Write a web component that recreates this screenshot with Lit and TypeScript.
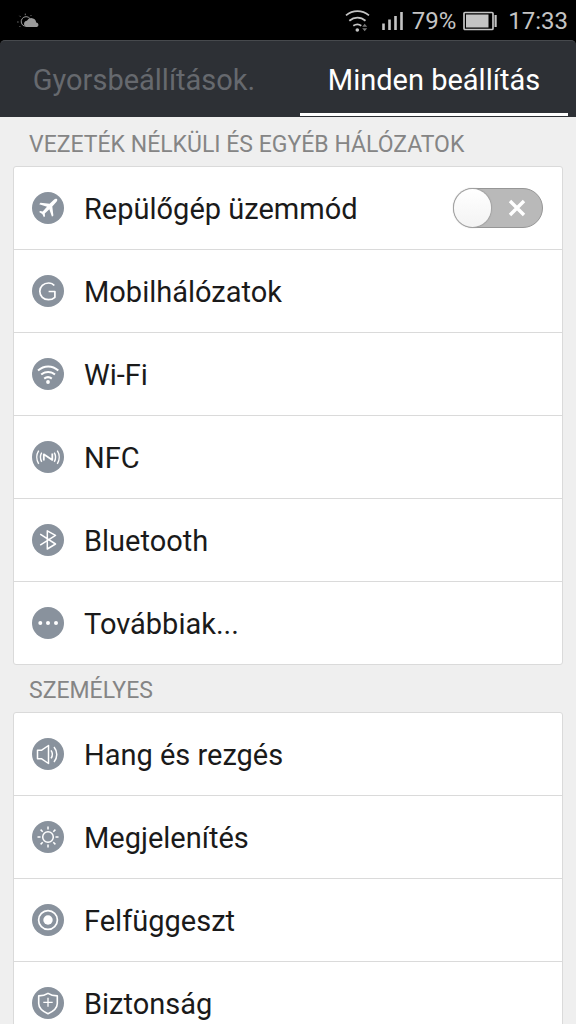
import { LitElement, html, css, svg, TemplateResult } from "lit";
import { customElement, state } from "lit/decorators.js";

interface Item {
  id: string;
  label: string;
  icon: TemplateResult;
  toggle?: boolean;
}

const icons = {
  plane: svg`<path class="fill" d="M24.900 7.100c-.8-.7-2-.3-3 .6l-4.300 4.100-9.100-1-1.300 1.400 7.800 2.600-4.300 4.600-2.600-.4-1 1.100 3.200 1.800 1.600 3.300 1.100-1-.2-2.700 4.500-4.300 2.700 7.500 1.400-1.300-1.100-8.800 4-4.500c.9-1 1.400-2.300.6-3z"/>`,
  mobile: svg`<path class="line" stroke-width="1.700" d="M22.300 10.600c-1.300-1.700-3.300-2.600-5.700-2.600-5 0-8.800 3.500-8.800 8.300s3.700 8.400 8.700 8.400c2.500 0 4.700-.9 6.400-2.400v-5.800h-6.300"/>`,
  wifi: svg`<path class="line" stroke-width="2" d="M6 12.500c6-5.400 14.300-5.400 20.300 0M9.200 16.600c4.200-3.600 9.700-3.600 13.800 0M12.200 20.600c2.400-1.900 5.200-1.900 7.600 0"/><circle class="fill" cx="16" cy="24" r="1.900"/>`,
  nfc: svg`<path class="line" stroke-width="1.800" stroke-linejoin="miter" d="M11.800 19.600v-6.300l8.500 5.600v-6.300"/><path class="line" stroke-width="1.400" d="M9.700 11.600c-1.500 2.700-1.500 6.500 0 9.200M6.700 9.600c-2.500 3.900-2.500 9.300 0 13.200M22.300 11.600c1.500 2.700 1.500 6.500 0 9.200M25.300 9.600c2.500 3.900 2.500 9.300 0 13.200"/>`,
  bluetooth: svg`<path class="line" stroke-width="1.500" d="M8.200 10.200l15.300 9.800-8.200 5V6.800l8.200 4.600-15.300 9.800"/>`,
  more: svg`<circle class="fill" cx="8.300" cy="16" r="2"/><circle class="fill" cx="16" cy="16" r="2"/><circle class="fill" cx="24" cy="16" r="2"/>`,
  sound: svg`<path class="line" stroke-width="1.500" stroke-linejoin="miter" d="M5.500 12.200h4.200l6.800-4.700v18l-6.800-4.700H5.500zM19 12.400c1.700 2.400 1.700 5.600 0 8M22 9c3.700 4.500 3.700 10.500 0 15"/>`,
  display: svg`<circle class="line" stroke-width="1.500" cx="16" cy="16" r="5.300"/><path class="line" stroke-width="1.500" d="M16 5.500v3M16 23.500v3M5.500 16h3M23.500 16h3M8.600 8.600l2.100 2.100M21.300 21.300l2.100 2.100M8.600 23.400l2.100-2.100M21.300 10.700l2.100-2.100"/>`,
  suspend: svg`<circle class="line" stroke-width="1.700" cx="16" cy="16" r="9.400"/><circle class="fill" cx="16" cy="16" r="4.700"/>`,
  security: svg`<path class="line" stroke-width="1.600" stroke-linejoin="miter" d="M16 6.300c2.600 1.700 5.700 2.500 9.300 2.600v7.600c0 4.800-4.300 8-9.300 10.300-5-2.300-9.300-5.500-9.300-10.300V8.900c3.600-.1 6.700-.9 9.300-2.600z"/><path class="line" stroke-width="1.300" d="M16 10.800v9M11.300 15.300h9.400"/>`,
};

const network: Item[] = [
  { id: "airplane", label: "Repülőgép üzemmód", icon: icons.plane, toggle: true },
  { id: "mobile", label: "Mobilhálózatok", icon: icons.mobile },
  { id: "wifi", label: "Wi-Fi", icon: icons.wifi },
  { id: "nfc", label: "NFC", icon: icons.nfc },
  { id: "bluetooth", label: "Bluetooth", icon: icons.bluetooth },
  { id: "more", label: "Továbbiak...", icon: icons.more },
];

const personal: Item[] = [
  { id: "sound", label: "Hang és rezgés", icon: icons.sound },
  { id: "display", label: "Megjelenítés", icon: icons.display },
  { id: "suspend", label: "Felfüggeszt", icon: icons.suspend },
  { id: "security", label: "Biztonság", icon: icons.security },
];

@customElement("status-bar")
export class StatusBar extends LitElement {
  static styles = css`
    :host {
      display: flex;
      align-items: center;
      justify-content: space-between;
      box-sizing: border-box;
      height: 40px;
      padding: 2px 8px 0 16px;
      background: #000;
      color: #c4c4c4;
      font-size: 24px;
      line-height: 38px;
    }
    .group {
      display: flex;
      align-items: center;
    }
    .signal {
      margin: 0 9px 0 11px;
    }
    .battery {
      margin: 0 10px 0 6px;
    }
    svg {
      display: block;
    }
  `;

  render() {
    return html`
      <svg width="24" height="16" viewBox="0 0 24 16" role="img" aria-label="Időjárás">
        <path d="M8.500 13.200a4.900 4.900 0 1 1 5.500-7.600" fill="none" stroke="#9a9a9a" stroke-width="1" />
        <path d="M9.300.6v1.600M3.500 2.800l1 1M14.400 3.100l1-1M1.200 9h1.400M3.500 13.900l.9-.9" stroke="#777" stroke-width="1" />
        <path d="M10.500 14a3.200 3.200 0 0 1 .4-6.300 5 5 0 0 1 9.300 1.700 2.400 2.400 0 0 1 .8 4.600z" fill="#9a9a9a" />
      </svg>
      <div class="group">
        <svg width="25" height="24" viewBox="0 0 25 24" role="img" aria-label="Wi-Fi">
          <path d="M1 6.400c6.800-5.600 16-5.600 23 0M4.300 11.800c5-4.200 11.300-4.200 16.200 0M8.300 16.800c2.700-1.900 5.600-1.900 8 0" fill="none" stroke="#c4c4c4" stroke-width="1.800" />
          <circle cx="12.300" cy="21" r="1.800" fill="#c4c4c4" />
          <path d="M17.200 17.800l2.500-3 2.500 3zM17.200 19.200h5l-2.500 3z" fill="#777" />
        </svg>
        <svg class="signal" width="22" height="20" viewBox="0 0 22 20" role="img" aria-label="Térerő">
          <path d="M2.500 19v-6.500M8.500 19V8.500M14.500 19V5M20.500 19V1" stroke="#c4c4c4" stroke-width="2.600" />
        </svg>
        <span>79%</span>
        <svg class="battery" width="36" height="20" viewBox="0 0 36 20" role="img" aria-label="Akkumulátor">
          <rect x="2" y="1.500" width="29" height="17" rx="1" fill="none" stroke="#c4c4c4" stroke-width="1.700" />
          <rect x="4" y="3.500" width="22.500" height="13" fill="#c4c4c4" />
          <path d="M32.500 4h2.200v12h-2.200" fill="#c4c4c4" />
        </svg>
        <time>17:33</time>
      </div>
    `;
  }
}

@customElement("settings-group")
export class SettingsGroup extends LitElement {
  static properties = {
    heading: { type: String },
    items: { attribute: false },
  };
  declare heading: string;
  declare items: Item[];

  static styles = css`
    :host {
      display: block;
      padding-bottom: 1px;
    }
    h2 {
      margin: 0;
      padding: 3px 16px 0;
      font-size: 23px;
      font-weight: 400;
      line-height: 43px;
      color: #858585;
    }
    ul {
      margin: 0;
      padding: 0;
      list-style: none;
      background: #fff;
      border: 1px solid #dadada;
      border-radius: 3px;
    }
    li + li {
      border-top: 1px solid #dadada;
    }
    .row {
      display: flex;
      align-items: center;
      gap: 20px;
      box-sizing: border-box;
      width: 100%;
      height: 82px;
      margin: 0;
      padding: 0 19px 0 18px;
      border: 0;
      background: none;
      color: #1a1a1a;
      font: inherit;
      font-size: 29px;
      text-align: left;
    }
    .name {
      flex: 1;
      padding-top: 1px;
    }
    .icon {
      flex: none;
      display: block;
      width: 32px;
      height: 32px;
    }
    .disc {
      fill: #89929d;
    }
    .fill {
      fill: #fff;
    }
    .line {
      fill: none;
      stroke: #fff;
      stroke-linejoin: round;
    }
    .switch {
      display: grid;
      align-items: center;
    }
    .switch > * {
      grid-area: 1 / 1;
    }
    .track {
      appearance: none;
      box-sizing: border-box;
      display: flex;
      width: 90px;
      height: 40px;
      margin: 0;
      border: 1px solid #969696;
      border-radius: 20px;
      background: #b9b9b9;
    }
    .track::before {
      content: "";
      width: 37px;
      height: 38px;
      border-radius: 19px;
      background: linear-gradient(#fff, #f3f3f3);
      box-shadow: 0 0 1px 1px #a2a2a2;
    }
    .track:checked {
      justify-content: flex-end;
      background: #3fb0c4;
    }
    .cross {
      justify-self: end;
      margin-right: 17px;
      pointer-events: none;
    }
    .track:checked + .cross {
      visibility: hidden;
    }
  `;

  private content(item: Item) {
    return html`
      <svg class="icon" viewBox="0 0 32 32" aria-hidden="true">
        <circle class="disc" cx="16" cy="16" r="16" />
        ${item.icon}
      </svg>
      <span class="name">${item.label}</span>
    `;
  }

  render() {
    return html`
      <h2>${this.heading}</h2>
      <ul>
        ${this.items.map(
          (item) => html`<li>
            ${item.toggle
              ? html`<label class="row" for=${item.id}>
                  ${this.content(item)}
                  <span class="switch">
                    <input class="track" id=${item.id} type="checkbox" role="switch" />
                    <svg class="cross" width="18" height="18" viewBox="0 0 18 18" aria-hidden="true">
                      <path d="M2 2l14 14M16 2L2 16" stroke="#fff" stroke-width="3.400" />
                    </svg>
                  </span>
                </label>`
              : html`<button class="row" type="button">${this.content(item)}</button>`}
          </li>`
        )}
      </ul>
    `;
  }
}

@customElement("app-root")
export class AppRoot extends LitElement {
  @state() private active = 1;

  static styles = css`
    :host {
      display: flex;
      flex-direction: column;
      height: 100vh;
      background: #000;
      font-family: Roboto, "Noto Sans", sans-serif;
    }
    .tabs {
      flex: none;
      display: grid;
      grid-template-columns: 1fr 1fr;
      gap: 22px;
      box-sizing: border-box;
      height: 77px;
      padding: 0 8px 1px 10px;
      background: #2d3035;
      border-top: 1px solid #46494d;
      border-radius: 5px 5px 0 0;
    }
    .tab {
      margin: 0;
      padding: 6px 0 0;
      border: 0;
      border-bottom: 3px solid transparent;
      background: none;
      color: #66696e;
      font: inherit;
      font-size: 29px;
      white-space: nowrap;
    }
    .tab[aria-selected="true"] {
      color: #fff;
      border-bottom-color: #fff;
    }
    .list {
      flex: 1;
      min-height: 0;
      overflow-y: auto;
      scrollbar-width: none;
      padding: 3px 13px 0;
      background: #efefef;
    }
  `;

  render() {
    return html`
      <status-bar></status-bar>
      <div class="tabs" role="tablist">
        ${["Gyorsbeállítások.", "Minden beállítás"].map(
          (name, i) => html`<button
            class="tab"
            type="button"
            role="tab"
            aria-selected=${this.active === i ? "true" : "false"}
            @click=${() => (this.active = i)}
          >${name}</button>`
        )}
      </div>
      <main class="list">
        <settings-group heading="VEZETÉK NÉLKÜLI ÉS EGYÉB HÁLÓZATOK" .items=${network}></settings-group>
        <settings-group heading="SZEMÉLYES" .items=${personal}></settings-group>
      </main>
    `;
  }
}
